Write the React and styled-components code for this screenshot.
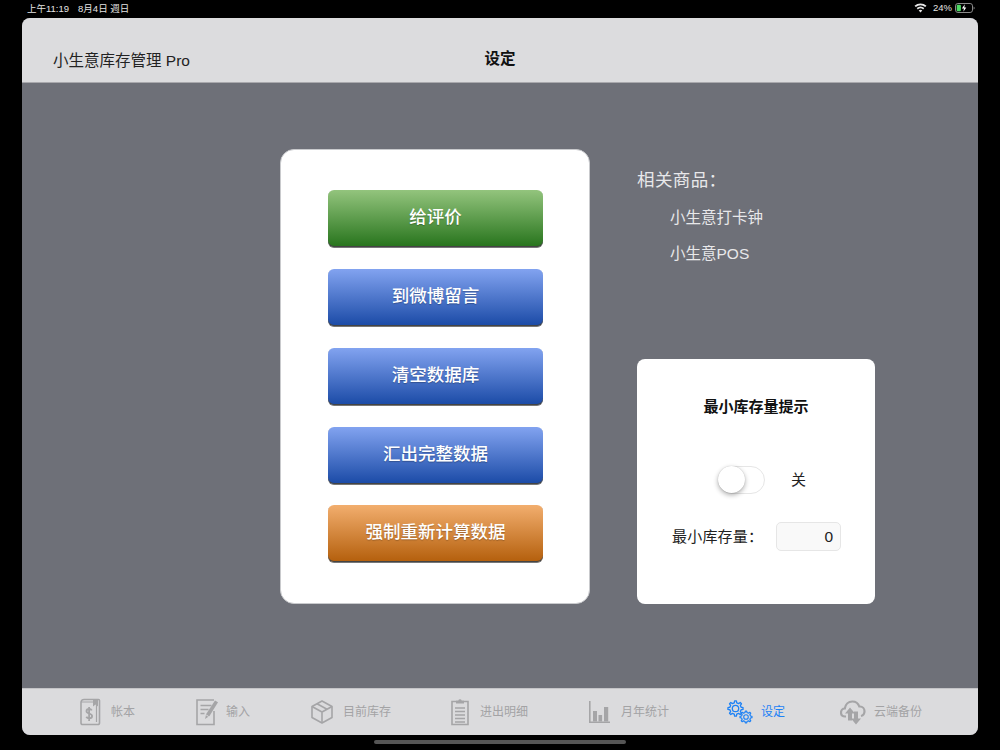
import React from 'react';
import styled, { createGlobalStyle } from 'styled-components';

const Global = createGlobalStyle`
  html, body { margin: 0; padding: 0; background: #000; }
  body { font-family: "Inter", "Noto Sans CJK SC", sans-serif; }
`;
const CJK = `"Liberation Sans", "Noto Sans CJK SC", sans-serif`;

const Screen = styled.div`
  width: 1000px; height: 750px; background: #000; display: flex; flex-direction: column; overflow: hidden;
`;
const StatusBar = styled.div`
  height: 18px; padding: 0 25px 3px 27px; box-sizing: border-box; display: flex; align-items: center; justify-content: space-between;
  color: #e4e4e4; font: 9.5px ${CJK};
`;
const StatusLeft = styled.div`display: flex; gap: 9px;`;
const StatusRight = styled.div`display: flex; align-items: center; gap: 3px;`;
const Window = styled.div`
  width: 956px; height: 717px; margin-left: 22px; border-radius: 8px; overflow: hidden; display: flex; flex-direction: column; background: #6e7078;
`;
const Header = styled.header`
  height: 65px; flex: none; background: #dcdcde; border-bottom: 1px solid #a9a9ad; box-sizing: border-box; position: relative;
  display: flex; align-items: center; justify-content: center; padding-top: 18px;
`;
const AppName = styled.div`position: absolute; left: 31px; top: 33px; font: 15.5px/20px ${CJK}; color: #222;`;
const PageTitle = styled.div`font: 600 15.5px/20px ${CJK}; color: #111; margin-top: 0;`;
const Content = styled.main`
  flex: 1; display: flex; align-items: flex-start; padding: 66px 0 0 258px; gap: 47px; box-sizing: border-box;
`;
const ButtonCard = styled.section`
  width: 310px; height: 455px; background: #fff; border-radius: 14px; box-sizing: border-box; padding: 40px 47px 0 47px;
  border: 1px solid #c9cacd; display: flex; flex-direction: column;
`;
const gradients = {
  green: ['#93c47d', '#27741c'],
  blue: ['#82a3f0', '#1a4aa6'],
  orange: ['#f2ae6e', '#b45f0c'],
};
const ActionButton = styled.button`
  width: 215px; height: 57px; flex: none; border: 0; border-radius: 6px; padding: 0 0 2px; margin-bottom: ${p => p.$gap}px;
  background: linear-gradient(${p => gradients[p.$tone][0]}, ${p => gradients[p.$tone][1]});
  box-shadow: inset 0 -1px 0 #444, 0 1px 0 #777;
  color: #fff; font: 500 17.5px/1 ${CJK}; letter-spacing: 0;
  text-shadow: 0 1px 1px rgba(0,0,0,.25);
`;
const Side = styled.aside`width: 238px; display: flex; flex-direction: column;`;
const Related = styled.div`height: 210px; color: #e8e8ea; padding-top: 20px; box-sizing: border-box;`;
const RelatedTitle = styled.div`font: 17.5px/22px ${CJK}; letter-spacing: .4px; margin-bottom: 17px;`;
const RelatedItem = styled.div`font: 15.5px/20px ${CJK}; margin: 0 0 16px 33px;`;
const AlertCard = styled.section`
  height: 245px; background: #fff; border-radius: 8px; display: flex; flex-direction: column; align-items: center; box-sizing: border-box; padding-top: 38px;
`;
const AlertTitle = styled.div`font: 600 15px/20px ${CJK}; color: #111;`;
const SwitchRow = styled.div`display: flex; align-items: center; margin-top: 49px; gap: 26px; padding-left: 12px;`;
const Switch = styled.div`
  width: 47px; height: 28px; border-radius: 14px; border: 1.5px solid #e6e6e6; box-sizing: border-box; position: relative; background: #fff;
`;
const Knob = styled.div`
  position: absolute; left: -1px; top: -1px; width: 27px; height: 27px; border-radius: 50%; background: #fff;
  box-shadow: 0 2px 5px rgba(0,0,0,.32), 0 0 1px rgba(0,0,0,.2);
`;
const SwitchLabel = styled.div`font: 15px/20px ${CJK}; color: #222;`;
const StockRow = styled.div`display: flex; align-items: center; margin-top: 28px; padding-left: 1px;`;
const StockLabel = styled.div`font: 15px/20px ${CJK}; color: #222; width: 104px; letter-spacing: .2px;`;
const StockInput = styled.div`
  width: 65px; height: 29px; box-sizing: border-box; border: 1px solid #e6e6e6; border-radius: 5px; background: #f9f9f9;
  text-align: right; padding-right: 7px; font: 15.5px/27px ${CJK}; color: #222;
`;
const TabBar = styled.nav`
  height: 47px; flex: none; background: #dbdbdd; border-top: 1px solid #c4c4c7; box-sizing: border-box; display: flex; align-items: center; padding-left: 57px;
`;
const Tab = styled.div`
  display: flex; align-items: center; flex: none; width: ${p => p.$w}px; gap: ${p => p.$gap}px;
  color: ${p => (p.$active ? '#1e82f5' : '#a3a3a5')}; font: 12px/16px ${CJK};
`;
const HomeBar = styled.div`width: 252px; height: 4px; border-radius: 2px; background: #555; margin: 5px 0 0 374px;`;

const GR = '#a5a5a7';
const Icon = ({ w = 26, h = 30, vb, children, color = GR }) => (
  <svg width={w} height={h} viewBox={vb || `0 0 ${w} ${h}`} fill="none" stroke={color} strokeWidth="1.6" style={{ flex: 'none' }}>
    {children}
  </svg>
);

const gearPath = (cx, cy, r, n = 8) => {
  const pts = [];
  const ro = r, ri = r * 0.76;
  for (let i = 0; i < n; i++) {
    const a = (i / n) * Math.PI * 2;
    const s = Math.PI / n;
    [[-0.55, ri], [-0.3, ro], [0.3, ro], [0.55, ri]].forEach(([k, rr]) => {
      pts.push(`${(cx + Math.cos(a + k * s) * rr).toFixed(2)},${(cy + Math.sin(a + k * s) * rr).toFixed(2)}`);
    });
  }
  return `M${pts.join('L')}Z`;
};

const tabs = [
  { label: '帐本', w: 117, gap: 10, icon: (
    <Icon w={22} h={28}>
      <path d="M2 4.5V25a1.5 1.5 0 0 0 1.5 1.5H19a1.5 1.5 0 0 0 1.5-1.5V2.5A1 1 0 0 0 19.5 1.5H5C3.2 1.5 2 2.8 2 4.5Z" />
      <path d="M2.5 4h15v20" strokeWidth="1.2" />
      <path d="M14 1.5h5v7l-2.5-2-2.5 2z" fill={GR} stroke="none" />
      <path d="M12.8 12.4c-.6-1-1.6-1.4-2.6-1.4-1.6 0-2.7.9-2.7 2.2 0 2.9 5.6 1.7 5.6 4.8 0 1.4-1.2 2.3-2.9 2.3-1.2 0-2.3-.5-2.9-1.6M10.1 9v14" strokeWidth="1.8" />
    </Icon>
  ) },
  { label: '输入', w: 115, gap: 8, icon: (
    <Icon w={22} h={28}>
      <path d="M18 13v13.5H1V2h17" />
      <path d="M4.5 7.5h11M4.5 11.5h8M4.5 15.5h4" />
      <path d="M9 21l1.2-5L19 2.5l3 1.8L13.5 18z" fill={GR} stroke="none" />
      <path d="M10.2 17l2.6 1.6" stroke="#dbdbdd" strokeWidth="1" />
    </Icon>
  ) },
  { label: '目前库存', w: 139, gap: 10, icon: (
    <Icon w={22} h={24}>
      <path d="M11 1l10 5.5v11L11 23 1 17.5v-11z" strokeLinejoin="round" />
      <path d="M1 6.5L11 12l10-5.5M11 12v11M6 3.8l10 5.4" />
    </Icon>
  ) },
  { label: '进出明细', w: 139, gap: 10, icon: (
    <Icon w={20} h={28}>
      <path d="M6 3.5H2v23h16v-23h-4" />
      <path d="M6 5.5V2.5h2.3a1.8 1.8 0 0 1 3.4 0H14v3z" fill={GR} stroke="none" />
      <path d="M5 10h10M5 13.5h10M5 17h10M5 20.5h10M5 24h10" strokeWidth="1.5" />
    </Icon>
  ) },
  { label: '月年统计', w: 138, gap: 11, icon: (
    <Icon w={21} h={22}>
      <path d="M.8 0v21.2H21" />
      <path d="M4 10h4v10.5H4zM9.5 14h3.6v6.5H9.5zM15 6h4.2v14.5H15z" fill={GR} stroke="none" />
    </Icon>
  ) },
  { label: '设定', w: 113, gap: 8, active: true, icon: (
    <Icon w={26} h={24} color="#1e82f5">
      <path d={gearPath(8.5, 8.5, 7.6)} strokeWidth="1.3" strokeLinejoin="round" />
      <circle cx="8.5" cy="8.5" r="3.2" strokeWidth="1.3" />
      <path d={gearPath(19, 17, 6)} strokeWidth="1.2" strokeLinejoin="round" />
      <circle cx="19" cy="17" r="2.3" strokeWidth="1.1" />
    </Icon>
  ) },
  { label: '云端备份', w: 100, gap: 8, icon: (
    <Icon w={26} h={26} vb="0 0 26 26">
      <path d="M6 17.5H5C2.6 17.5 1 15.8 1 13.5s1.6-4 3.8-4c.6-4 3.5-7 7.5-7 3.4 0 6 2 7 5 .3 0 .5 0 .7 0 2.6 0 4.5 2.2 4.5 4.8s-1.6 4.2-3.5 4.7" strokeWidth="2.2" />
      <path d="M10 8.5l-5 6h3v7h4v-7h3z" fill={GR} stroke="none" transform="translate(0 0)" />
      <path d="M15 25.5l5-6h-3v-7h-4v7h-3z" fill={GR} stroke="none" transform="translate(1 0)" />
    </Icon>
  ) },
];

const actions = [
  ['给评价', 'green', 22], ['到微博留言', 'blue', 22], ['清空数据库', 'blue', 22], ['汇出完整数据', 'blue', 21], ['强制重新计算数据', 'orange', 0],
];

export default function App() {
  return (
    <Screen>
      <Global />
      <StatusBar>
        <StatusLeft><span>上午11:19</span><span>8月4日 週日</span></StatusLeft>
        <StatusRight>
          <svg width="13" height="10" viewBox="0 0 13 10" fill="#e8e8e8"><path d="M6.5 9.5L4.7 7.4a2.8 2.8 0 0 1 3.6 0zM3.8 6.4L2.7 5.1a5.9 5.9 0 0 1 7.6 0L9.2 6.4a4.2 4.2 0 0 0-5.4 0zM1.8 4.1L.5 2.8a9.2 9.2 0 0 1 12 0L11.2 4.1a7.4 7.4 0 0 0-9.4 0z"/></svg>
          <span>&nbsp;24%</span>
          <svg width="20" height="10" viewBox="0 0 20 10" fill="none"><rect x=".5" y=".5" width="17" height="9" rx="2.4" stroke="#8a8a8a"/><rect x="1.7" y="1.7" width="4.2" height="6.6" rx="1" fill="#4cd964"/><path d="M18.6 3.4c.7.3 1 .9 1 1.6s-.3 1.3-1 1.6z" fill="#8a8a8a"/><path d="M9.8 1.3L6.9 5.6h2l-.5 3.1 2.9-4.3h-2z" fill="#fff"/></svg>
        </StatusRight>
      </StatusBar>
      <Window>
        <Header>
          <AppName>小生意库存管理 Pro</AppName>
          <PageTitle>设定</PageTitle>
        </Header>
        <Content>
          <ButtonCard>
            {actions.map(([t, tone, gap]) => <ActionButton key={t} $tone={tone} $gap={gap}>{t}</ActionButton>)}
          </ButtonCard>
          <Side>
            <Related>
              <RelatedTitle>相关商品：</RelatedTitle>
              <RelatedItem>小生意打卡钟</RelatedItem>
              <RelatedItem>小生意POS</RelatedItem>
            </Related>
            <AlertCard>
              <AlertTitle>最小库存量提示</AlertTitle>
              <SwitchRow>
                <Switch><Knob /></Switch>
                <SwitchLabel>关</SwitchLabel>
              </SwitchRow>
              <StockRow>
                <StockLabel>最小库存量：</StockLabel>
                <StockInput>0</StockInput>
              </StockRow>
            </AlertCard>
          </Side>
        </Content>
        <TabBar>
          {tabs.map(t => (
            <Tab key={t.label} $w={t.w} $gap={t.gap} $active={t.active}>{t.icon}<span>{t.label}</span></Tab>
          ))}
        </TabBar>
      </Window>
      <HomeBar />
    </Screen>
  );
}
